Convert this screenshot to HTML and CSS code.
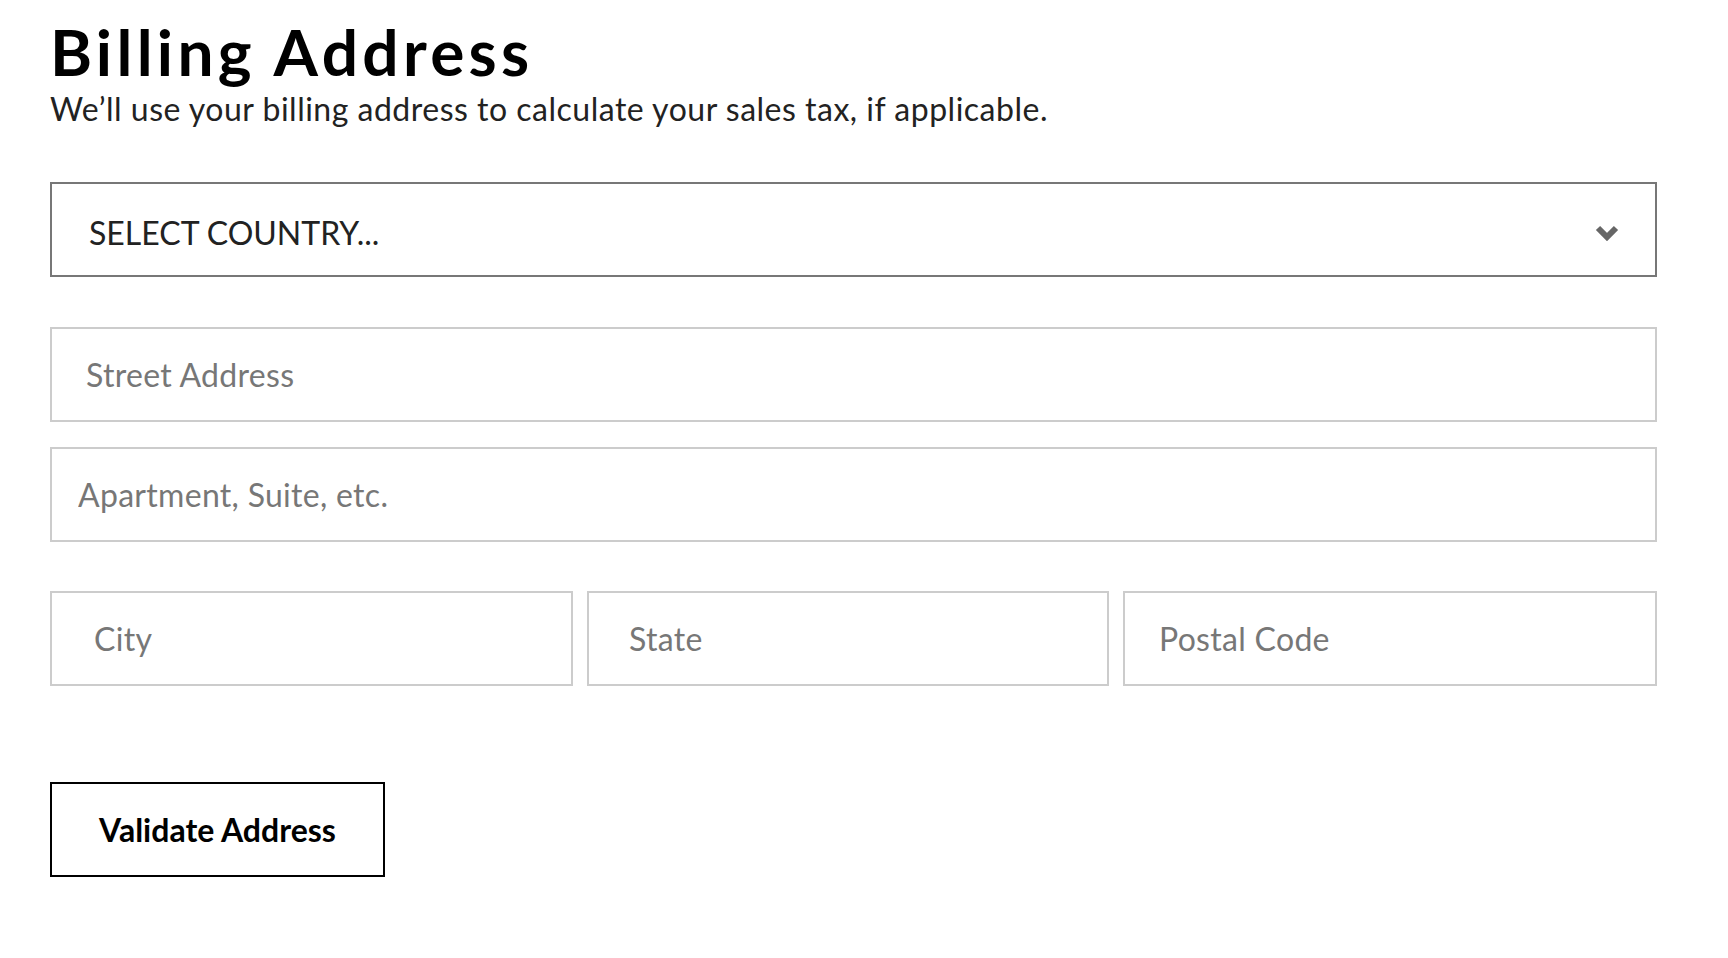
FILE: index.html
```html
<!DOCTYPE html>
<html lang="en">
<head>
<meta charset="utf-8">
<title>Billing Address</title>
<link rel="stylesheet" href="styles.css">
</head>
<body>
<main class="page">
  <h1 class="title">Billing Address</h1>
  <p class="subtitle">We’ll use your billing address to calculate your sales tax, if applicable.</p>
  <form class="form">
    <div class="select">
      <span class="select-label">SELECT COUNTRY...</span>
      <svg class="chevron" width="24" height="17" viewBox="0 0 24 17" aria-hidden="true">
        <polyline points="3,4 12,13 21,4" fill="none" stroke="#666" stroke-width="6" stroke-linecap="butt" stroke-linejoin="miter"/>
      </svg>
    </div>
    <input class="field field-street" type="text" placeholder="Street Address">
    <input class="field field-apt" type="text" placeholder="Apartment, Suite, etc.">
    <div class="row">
      <input class="field field-city" type="text" placeholder="City">
      <input class="field field-state" type="text" placeholder="State">
      <input class="field field-postal" type="text" placeholder="Postal Code">
    </div>
    <button class="button" type="button">Validate Address</button>
  </form>
</main>
</body>
</html>
```
FILE: styles.css
```css
html, body {
  margin: 0;
  padding: 0;
  background: #fff;
}

body {
  font-family: Lato, "Noto Sans", sans-serif;
  color: #222;
}

.page {
  padding: 20px 71px 0 50px;
}

.title {
  margin: 0;
  font-size: 64px;
  line-height: 64px;
  font-weight: 700;
  color: #000;
  letter-spacing: 4.3px;
}

.subtitle {
  margin: 10px 0 0;
  font-size: 32px;
  line-height: 30px;
  letter-spacing: 0.5px;
  color: #222;
}

.form {
  display: flex;
  flex-direction: column;
  margin-top: 58px;
}

.select {
  box-sizing: border-box;
  height: 95px;
  border: 2px solid #777;
  display: flex;
  align-items: center;
  padding: 0 36px 0 37px;
}

.select-label {
  margin-top: 7px;
  font-size: 32px;
  line-height: 32px;
  color: #222;
}

.chevron {
  margin-left: auto;
  margin-top: 5px;
  display: block;
}

.field {
  box-sizing: border-box;
  height: 95px;
  border: 2px solid #ccc;
  border-radius: 0;
  background: #fff;
  font-family: Lato, "Noto Sans", sans-serif;
  font-size: 32px;
  letter-spacing: 0.3px;
  color: #222;
  outline: none;
  margin: 0;
  width: 100%;
}

.field::placeholder {
  color: #777;
  opacity: 1;
}

.field-street {
  margin-top: 50px;
  padding-left: 34px;
}

.field-apt {
  margin-top: 25px;
  padding-left: 26px;
}

.row {
  margin-top: 49px;
  display: grid;
  grid-template-columns: 523px 522px 1fr;
  column-gap: 14px;
}

.field-city {
  padding-left: 42px;
}

.field-state {
  padding-left: 40px;
}

.field-postal {
  padding-left: 34px;
}

.button {
  box-sizing: border-box;
  margin-top: 96px;
  width: 335px;
  height: 95px;
  border: 2px solid #000;
  border-radius: 0;
  background: #fff;
  font-family: Lato, "Noto Sans", sans-serif;
  font-size: 32px;
  font-weight: 700;
  color: #000;
  padding: 0;
  cursor: pointer;
}
```
